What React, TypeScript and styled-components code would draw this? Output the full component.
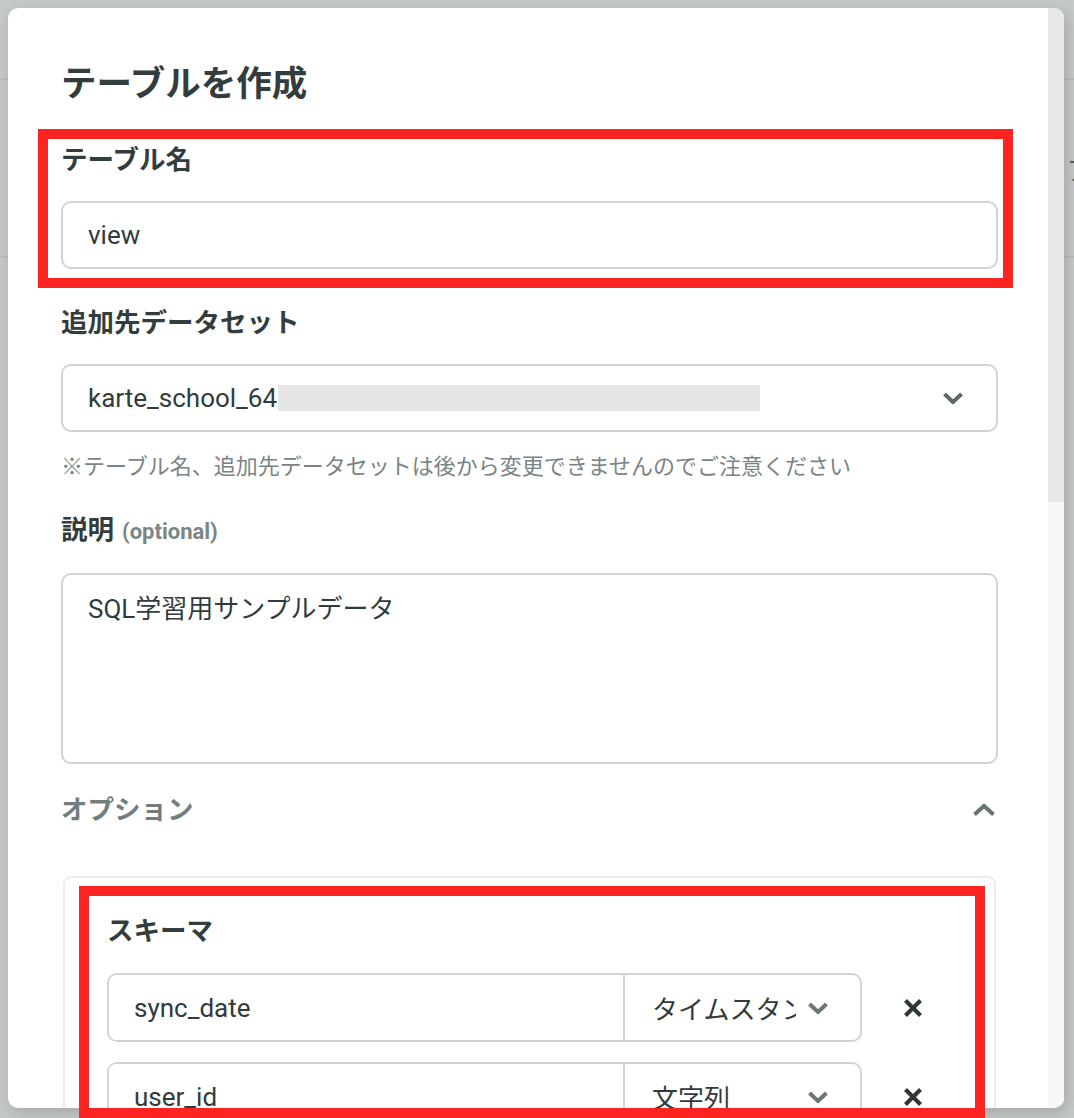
import React from "react";
import styled, { createGlobalStyle } from "styled-components";

const GlobalStyle = createGlobalStyle`
  html, body { margin: 0; padding: 0; }
  body { font-family: Roboto, "Noto Sans CJK JP", sans-serif; }
  *, *::before, *::after { box-sizing: border-box; }
`;

const Screen = styled.div`
  position: relative;
  width: 1074px;
  height: 1118px;
  overflow: hidden;
  background: #c4c8c8;
`;

const BackPage = styled.div`
  display: flex;
  flex-direction: column;
`;

const BackRow = styled.div<{ $h: number }>`
  height: ${(p) => p.$h}px;
  border-bottom: 2px solid #b7bbbb;
  display: flex;
  align-items: center;
  justify-content: flex-end;
`;

const BackText = styled.span`
  font-size: 26px;
  color: #555d5d;
  margin-right: -19px;
`;

const Modal = styled.div`
  position: absolute;
  top: 8px;
  left: 8px;
  width: 1056px;
  height: 1100px;
  background: #ffffff;
  border-radius: 10px;
  overflow: hidden;
  display: flex;
  box-shadow: 3px 5px 14px rgba(0, 0, 0, 0.16);
`;

const Body = styled.div`
  flex: 1;
  min-width: 0;
  padding: 52px 50px 0 53px;
  display: flex;
  flex-direction: column;
`;

const Scrollbar = styled.div`
  width: 16px;
  display: flex;
  flex-direction: column;
  background: #f7f7f7;
`;

const Thumb = styled.div`
  height: 494px;
  background: #e7e9e9;
`;

const Title = styled.h1`
  margin: 0;
  font-size: 35.5px;
  line-height: 48px;
  font-weight: 700;
  color: #333d3d;
`;

const Field = styled.div<{ $mt: number }>`
  display: flex;
  flex-direction: column;
  gap: 23px;
  margin-top: ${(p) => p.$mt}px;
`;

const Label = styled.div`
  font-size: 26.5px;
  line-height: 36px;
  font-weight: 700;
  color: #333d3d;
`;

const Optional = styled.span`
  font-size: 22px;
  font-weight: 700;
  color: #7b8585;
  margin-left: 8px;
`;

const TextInput = styled.input`
  width: 100%;
  height: 68px;
  border: 2px solid #d0d4d3;
  border-radius: 10px;
  padding: 0 25px;
  font-family: Roboto, "Noto Sans CJK JP", sans-serif;
  font-size: 26px;
  color: #313b3b;
  background: #fff;
  outline: none;
`;

const SelectBox = styled.div`
  position: relative;
  width: 100%;
  height: 68px;
  border: 2px solid #d0d4d3;
  border-radius: 10px;
  padding: 0 80px 0 25px;
  display: flex;
  align-items: center;
  font-size: 26px;
  color: #313b3b;
`;

const Redacted = styled.span`
  display: inline-block;
  width: 482px;
  height: 26px;
  margin-left: 1px;
  background: #e6e6e6;
`;

const ChevronSlot = styled.span<{ $right: number; $color: string }>`
  position: absolute;
  right: ${(p) => p.$right}px;
  top: 50%;
  transform: translateY(-50%);
  display: flex;
  color: ${(p) => p.$color};
`;

const Note = styled.p`
  margin: 20px 0 0;
  font-size: 22px;
  line-height: 30px;
  color: #7a8484;
`;

const TextArea = styled.textarea`
  width: 100%;
  height: 191px;
  border: 2px solid #d0d4d3;
  border-radius: 10px;
  padding: 16px 25px;
  font-family: Roboto, "Noto Sans CJK JP", sans-serif;
  font-size: 26px;
  line-height: 36px;
  color: #313b3b;
  resize: none;
  outline: none;
  background: #fff;
`;

const OptionsHeader = styled.div`
  margin-top: 28px;
  display: flex;
  align-items: center;
  justify-content: space-between;
  padding-right: 2px;
`;

const OptionsTitle = styled.span`
  font-size: 26.5px;
  line-height: 36px;
  font-weight: 700;
  color: #737d7d;
`;

const ToggleIcon = styled.span`
  display: flex;
  color: #6a7474;
`;

const Card = styled.div`
  margin: 48px 2px 0;
  border: 2px solid #ededed;
  border-radius: 8px;
  padding: 35px 30px 30px 42px;
  display: flex;
  flex-direction: column;
`;

const SchemaRows = styled.div`
  margin-top: 24px;
  display: flex;
  flex-direction: column;
  gap: 20px;
`;

const SchemaRow = styled.div`
  display: flex;
  align-items: center;
`;

const Group = styled.div`
  flex: 1;
  height: 69px;
  border: 2px solid #d0d4d3;
  border-radius: 10px;
  display: flex;
  overflow: hidden;
`;

const NameInput = styled.input`
  flex: 1;
  min-width: 0;
  border: none;
  padding: 0 25px;
  font-family: Roboto, "Noto Sans CJK JP", sans-serif;
  font-size: 26px;
  color: #313b3b;
  outline: none;
  background: #fff;
`;

const TypeSelect = styled.div`
  position: relative;
  width: 237px;
  border-left: 2px solid #d0d4d3;
  padding: 0 64px 0 27px;
  display: flex;
  align-items: center;
  font-size: 26px;
  color: #313b3b;
  white-space: nowrap;
  overflow: hidden;
`;

const TypeText = styled.span`
  overflow: hidden;
  display: block;
`;

const RemoveButton = styled.button`
  width: 102px;
  height: 40px;
  border: none;
  background: none;
  padding: 0;
  display: flex;
  align-items: center;
  justify-content: center;
  color: #2f3838;
`;

const Highlight = styled.div<{ $top: number; $left: number; $w: number; $h: number }>`
  position: absolute;
  top: ${(p) => p.$top}px;
  left: ${(p) => p.$left}px;
  width: ${(p) => p.$w}px;
  height: ${(p) => p.$h}px;
  border: 10px solid #fb2420;
  pointer-events: none;
`;

const ChevronDown = () => (
  <svg width="22" height="13" viewBox="0 0 22 13" fill="none">
    <polyline points="2.5,2.5 11,10.5 19.5,2.5" stroke="currentColor" strokeWidth="4" strokeLinejoin="miter" />
  </svg>
);

const ChevronUp = () => (
  <svg width="24" height="14" viewBox="0 0 24 14" fill="none">
    <polyline points="2.5,11.5 12,3 21.5,11.5" stroke="currentColor" strokeWidth="4" strokeLinejoin="miter" />
  </svg>
);

const XIcon = () => (
  <svg width="20" height="20" viewBox="0 0 20 20" fill="none">
    <path d="M2.5 2.5 L17.5 17.5 M17.5 2.5 L2.5 17.5" stroke="currentColor" strokeWidth="4.2" />
  </svg>
);

const schema = [
  { name: "sync_date", type: "タイムスタンプ" },
  { name: "user_id", type: "文字列" },
];

export default function App() {
  return (
    <>
      <GlobalStyle />
      <Screen>
        <BackPage>
          <BackRow $h={80} />
          <BackRow $h={178}>
            <BackText>ア</BackText>
          </BackRow>
        </BackPage>
        <Modal>
          <Body>
            <Title>テーブルを作成</Title>
            <Field $mt={34}>
              <Label>テーブル名</Label>
              <TextInput readOnly value="view" />
            </Field>
            <Field $mt={36}>
              <Label>追加先データセット</Label>
              <SelectBox>
                karte_school_64
                <Redacted />
                <ChevronSlot $right={32} $color="#5f6969">
                  <ChevronDown />
                </ChevronSlot>
              </SelectBox>
            </Field>
            <Note>※テーブル名、追加先データセットは後から変更できませんのでご注意ください</Note>
            <Field $mt={30}>
              <Label>
                説明<Optional>(optional)</Optional>
              </Label>
              <TextArea readOnly value="SQL学習用サンプルデータ" />
            </Field>
            <OptionsHeader>
              <OptionsTitle>オプション</OptionsTitle>
              <ToggleIcon>
                <ChevronUp />
              </ToggleIcon>
            </OptionsHeader>
            <Card>
              <Label>スキーマ</Label>
              <SchemaRows>
                {schema.map((col) => (
                  <SchemaRow key={col.name}>
                    <Group>
                      <NameInput readOnly value={col.name} />
                      <TypeSelect>
                        <TypeText>{col.type}</TypeText>
                        <ChevronSlot $right={31} $color="#6c7676">
                          <ChevronDown />
                        </ChevronSlot>
                      </TypeSelect>
                    </Group>
                    <RemoveButton aria-label="削除">
                      <XIcon />
                    </RemoveButton>
                  </SchemaRow>
                ))}
              </SchemaRows>
            </Card>
          </Body>
          <Scrollbar>
            <Thumb />
          </Scrollbar>
        </Modal>
        <Highlight $top={129} $left={38} $w={975} $h={159} />
        <Highlight $top={886} $left={79} $w={906} $h={232} />
      </Screen>
    </>
  );
}
